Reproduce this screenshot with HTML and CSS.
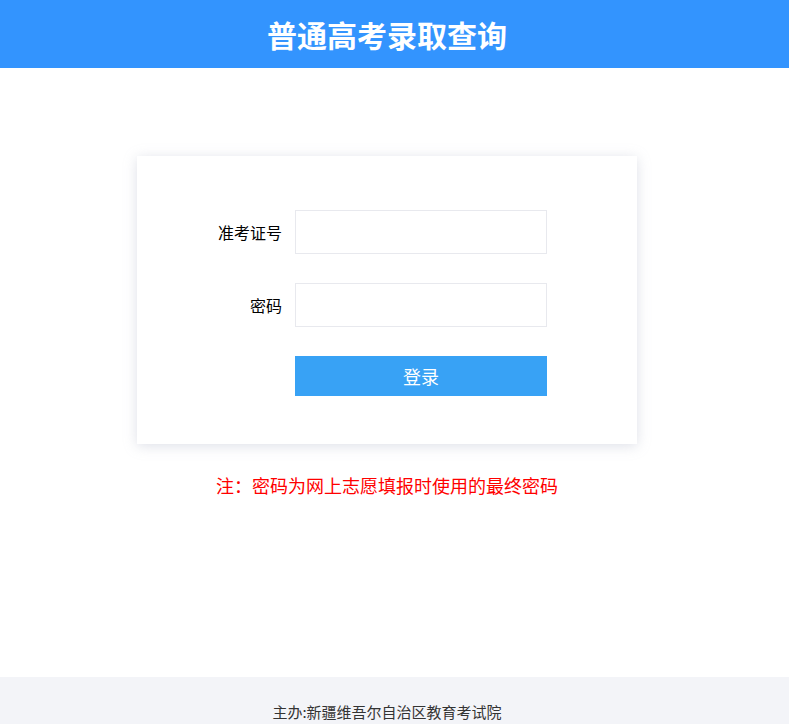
FILE: index.html
```html
<!DOCTYPE html>
<html lang="zh-CN">
<head>
<meta charset="utf-8">
<title>普通高考录取查询</title>
<link rel="stylesheet" href="styles.css">
</head>
<body>
<header class="topbar">
  <h1 class="title">普通高考录取查询</h1>
</header>
<main class="main">
  <form class="card" onsubmit="return false">
    <div class="row">
      <label class="label" for="ksh">准考证号</label>
      <input class="field" id="ksh" type="text">
    </div>
    <div class="row">
      <label class="label" for="pwd">密码</label>
      <input class="field" id="pwd" type="password">
    </div>
    <div class="row">
      <span class="label"></span>
      <button class="btn" type="submit">登录</button>
    </div>
  </form>
  <p class="note">注：密码为网上志愿填报时使用的最终密码</p>
</main>
<footer class="footer">
  <p class="footer-text">主办:新疆维吾尔自治区教育考试院</p>
</footer>
</body>
</html>
```
FILE: styles.css
```css
* { box-sizing: border-box; }
html, body { margin: 0; padding: 0; }
body {
  font-family: "Noto Sans CJK SC", "Noto Sans", sans-serif;
  background: #fff;
  color: #000;
  min-height: 724px;
  display: flex;
  flex-direction: column;
}
.topbar {
  height: 68px;
  background: #3394fe;
  display: flex;
  align-items: center;
  justify-content: center;
  padding-right: 15px;
}
.title {
  margin: 0;
  color: #fff;
  font-size: 30px;
  font-weight: 700;
  line-height: 1;
}
.main {
  flex: 1;
  display: flex;
  flex-direction: column;
  align-items: center;
  padding: 88px 15px 0 0;
}
.card {
  width: 500px;
  height: 288px;
  background: #fff;
  box-shadow: 0 2px 12px rgba(160, 165, 190, 0.35);
  padding: 54px 0 0 0;
  display: flex;
  flex-direction: column;
  gap: 29px;
}
.row {
  display: flex;
  align-items: center;
}
.label {
  width: 158px;
  padding-right: 13px;
  text-align: right;
  font-size: 16px;
}
.field {
  width: 252px;
  height: 44px;
  border: 1px solid #e8e9ee;
  background: #fff;
  outline: none;
  padding: 0 10px;
  font-size: 16px;
}
.btn {
  width: 252px;
  height: 40px;
  border: 0;
  background: #38a2f5;
  color: #fff;
  font-family: inherit;
  font-size: 18px;
  cursor: pointer;
}
.note {
  margin: 28px 0 0 0;
  color: #ff0000;
  font-size: 18px;
  line-height: 26px;
}
.footer {
  height: 47px;
  background: #f3f4f8;
  display: flex;
  justify-content: center;
  padding: 25px 15px 0 0;
}
.footer-text {
  margin: 0;
  font-size: 15px;
  color: #333;
  line-height: 20px;
}
```
